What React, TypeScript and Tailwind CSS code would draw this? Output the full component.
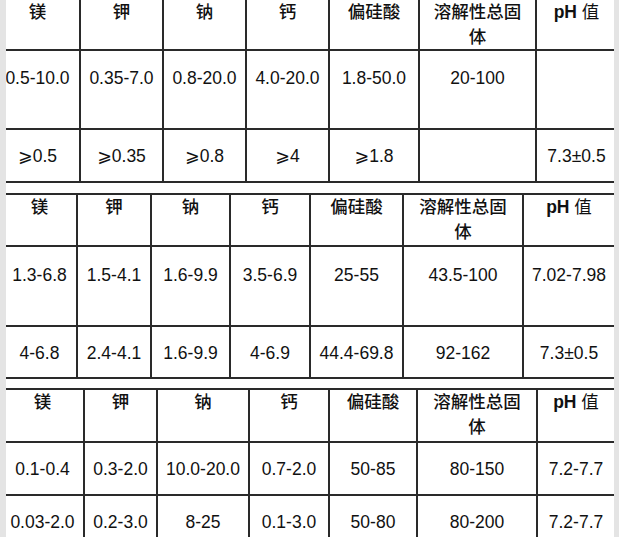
import React from "react";

type Tbl = {
  ml: string;
  top: boolean;
  widths: string[];
  rows: { h: string; pt: string; cells: string[] }[];
};

const HEAD = ["镁", "钾", "钠", "钙", "偏硅酸", "溶解性总固体", "pH 值"];

const GE = ({ v }: { v: string }) => {
  if (v.startsWith("⩾")) {
    return (
      <span>
        <span style={{ fontFamily: '"DejaVu Sans", sans-serif' }}>⩾</span>
        {v.slice(1)}
      </span>
    );
  }
  return <span>{v}</span>;
};

const tables: Tbl[] = [
  {
    ml: "ml-[-10px]",
    top: false,
    widths: ["w-[85px]", "w-[83px]", "w-[83px]", "w-[83px]", "w-[90px]", "w-[117px]", "w-[79px]"],
    rows: [
      { h: "h-[51px]", pt: "pt-0", cells: HEAD },
      { h: "h-[79px]", pt: "pt-[15px]", cells: ["0.5-10.0", "0.35-7.0", "0.8-20.0", "4.0-20.0", "1.8-50.0", "20-100", ""] },
      { h: "h-[53px]", pt: "pt-[14px]", cells: ["⩾0.5", "⩾0.35", "⩾0.8", "⩾4", "⩾1.8", "", "7.3±0.5"] },
    ],
  },
  {
    ml: "ml-[-3px]",
    top: true,
    widths: ["w-[75px]", "w-[74px]", "w-[79px]", "w-[80px]", "w-[93px]", "w-[120px]", "w-[90px]"],
    rows: [
      { h: "h-[52px]", pt: "pt-0", cells: HEAD },
      { h: "h-[80px]", pt: "pt-[16px]", cells: ["1.3-6.8", "1.5-4.1", "1.6-9.9", "3.5-6.9", "25-55", "43.5-100", "7.02-7.98"] },
      { h: "h-[52px]", pt: "pt-[14px]", cells: ["4-6.8", "2.4-4.1", "1.6-9.9", "4-6.9", "44.4-69.8", "92-162", "7.3±0.5"] },
    ],
  },
  {
    ml: "ml-[-4px]",
    top: true,
    widths: ["w-[83px]", "w-[73px]", "w-[92px]", "w-[80px]", "w-[88px]", "w-[120px]", "w-[76px]"],
    rows: [
      { h: "h-[53px]", pt: "pt-0", cells: HEAD },
      { h: "h-[53px]", pt: "pt-[14px]", cells: ["0.1-0.4", "0.3-2.0", "10.0-20.0", "0.7-2.0", "50-85", "80-150", "7.2-7.7"] },
      { h: "h-[53px]", pt: "pt-[14px]", cells: ["0.03-2.0", "0.2-3.0", "8-25", "0.1-3.0", "50-80", "80-200", "7.2-7.7"] },
    ],
  },
];

function Table({ t }: { t: Tbl }) {
  return (
    <div className={`flex flex-col ${t.ml} w-[640px] ${t.top ? "border-t-2 border-[#2a2a2a]" : ""}`}>
      {t.rows.map((r, ri) => (
        <div key={ri} className={`flex ${r.h} border-b-2 border-[#2a2a2a] box-border`}>
          {r.cells.map((c, ci) => (
            <div
              key={ci}
              className={`${t.widths[ci]} shrink-0 box-border ${ci < 6 ? "border-r-2 border-[#2a2a2a]" : ""} ${r.pt} px-2 flex justify-center items-start text-center leading-[25px]`}
            >
              {ri === 0 ? (
                c === "pH 值" ? (
                  <span>
                    <span className="font-bold">pH</span> 值
                  </span>
                ) : (
                  <span className="font-medium">{c}</span>
                )
              ) : (
                <span className="whitespace-nowrap">
                  <GE v={c} />
                </span>
              )}
            </div>
          ))}
        </div>
      ))}
    </div>
  );
}

export default function App() {
  return (
    <div
      className="flex w-[619px] h-[537px] overflow-hidden bg-white text-[#111111] text-[17.5px]"
      style={{ fontFamily: '"Liberation Sans", "Noto Sans CJK SC", sans-serif' }}
    >
      <div className="w-[6px] shrink-0 bg-[#e4e4e4]" />
      <div className="w-[608px] shrink-0 overflow-hidden flex flex-col bg-white">
        <Table t={tables[0]} />
        <div className="h-[10px] shrink-0" />
        <Table t={tables[1]} />
        <div className="h-[9px] shrink-0" />
        <Table t={tables[2]} />
      </div>
      <div className="w-[5px] shrink-0 bg-[#e4e4e4]" />
    </div>
  );
}
